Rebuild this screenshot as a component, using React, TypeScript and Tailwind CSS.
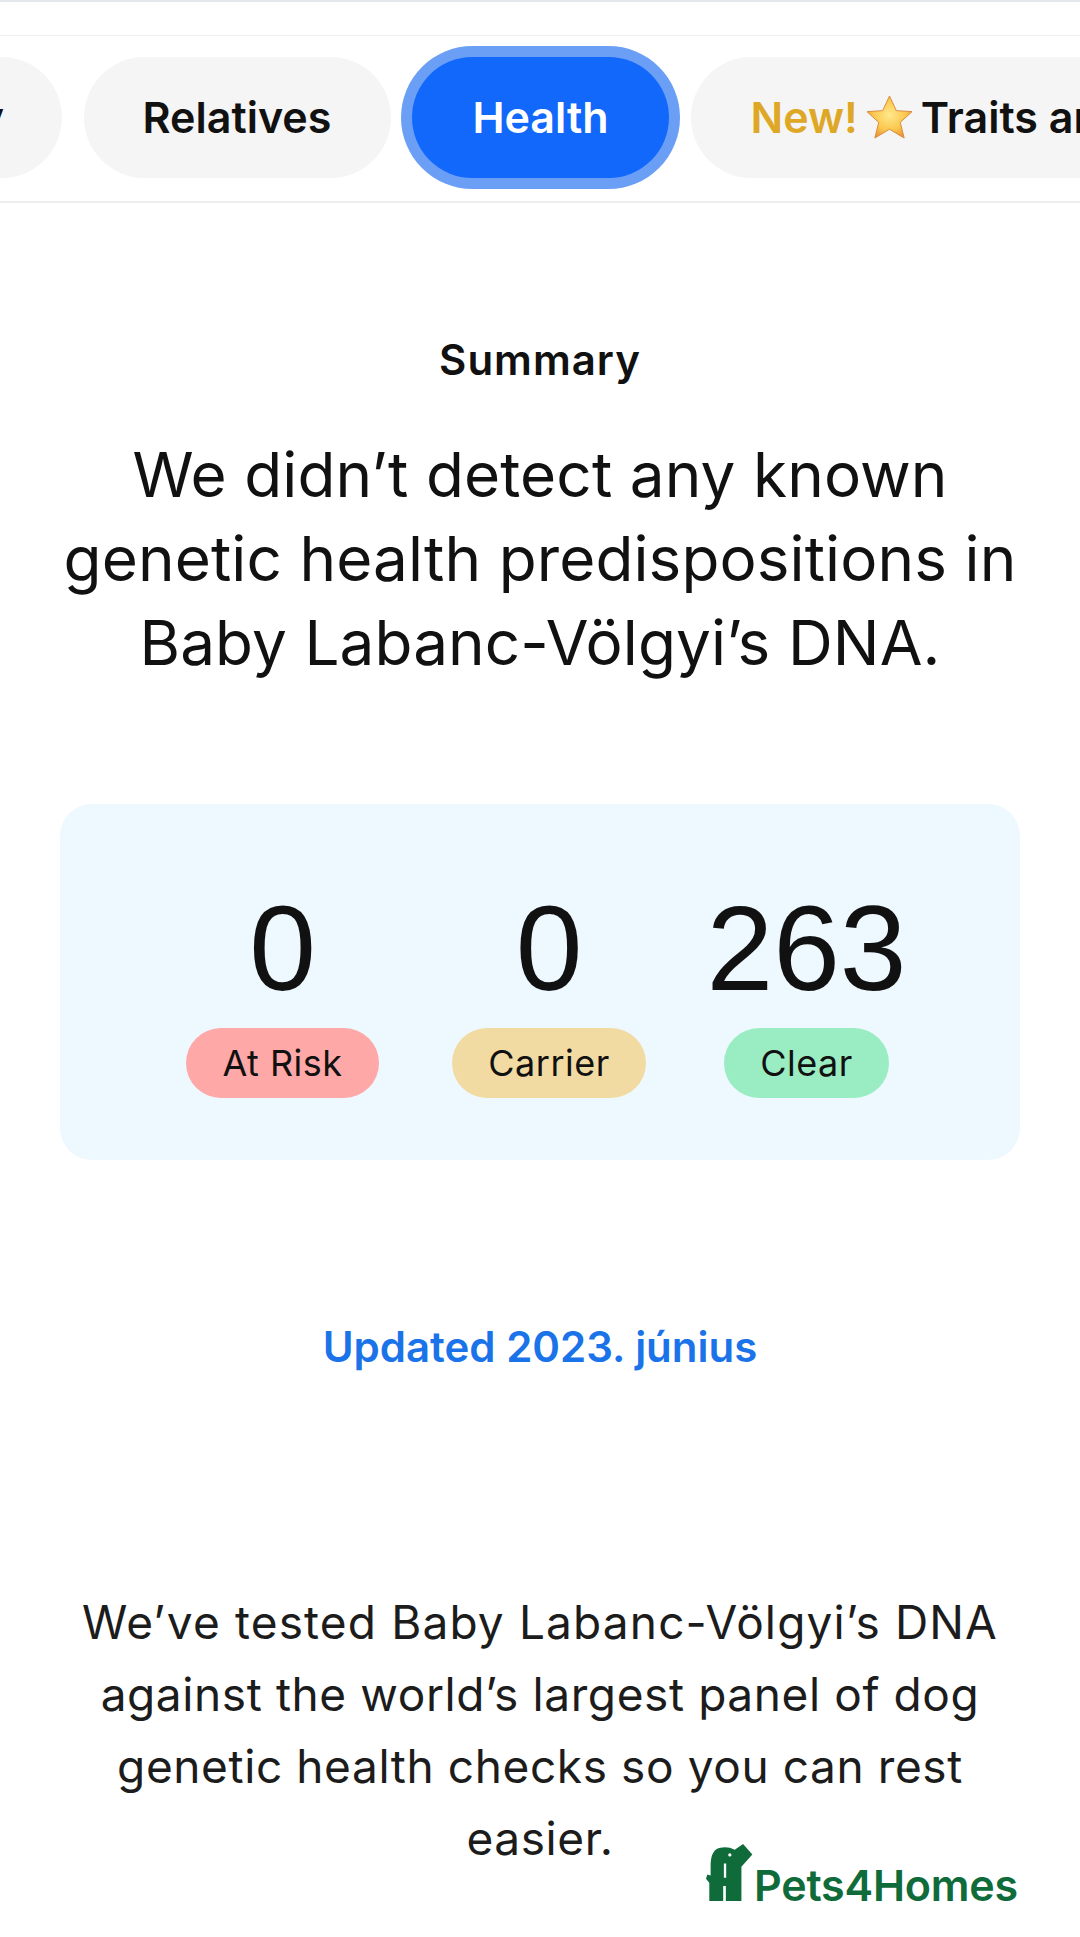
const sans = 'font-["Inter","Liberation_Sans",sans-serif]'

function Star() {
  return (
    <svg viewBox="-1 -1 48 46" className="w-[47px] h-[45px] shrink-0 mx-[8px]">
      <defs>
        <radialGradient id="star" cx="0.5" cy="0.45" r="0.6">
          <stop offset="0" stopColor="#ffe88c" />
          <stop offset="0.6" stopColor="#fbc74e" />
          <stop offset="1" stopColor="#e58f35" />
        </radialGradient>
      </defs>
      <path
        d="M23 0 L30 15 L46 16 L34 27 L38 43 L23 34 L8 43 L12 27 L0 16 L16 15 Z"
        fill="url(#star)"
        stroke="#d98a3c"
        strokeWidth="1"
        strokeLinejoin="round"
      />
    </svg>
  )
}

function Tab({ children, active, className }: { children: React.ReactNode; active?: boolean; className: string }) {
  return (
    <div
      className={`h-[121px] rounded-[61px] flex items-center shrink-0 whitespace-nowrap text-[43px] font-semibold ${className} ${
        active ? 'bg-[#1268fb] text-white shadow-[0_0_0_11px_#6b9ff5]' : 'bg-[#f5f5f5] text-[#111111]'
      }`}
    >
      {children}
    </div>
  )
}

function Stat({ value, label, color, className }: { value: string; label: string; color: string; className: string }) {
  return (
    <div className={`flex flex-col items-center ${className}`}>
      <p className="font-['Liberation_Sans',sans-serif] text-[120px] leading-[118px] text-[#111111]">{value}</p>
      <span className={`mt-[21px] h-[70px] rounded-[35px] px-[36px] flex items-center text-[36px] tracking-[0.5px] text-[#111111] ${color}`}>
        {label}
      </span>
    </div>
  )
}

export default function App() {
  return (
    <div className={`w-[1080px] h-[1937px] bg-white overflow-hidden relative ${sans}`}>
      <div className="h-[36px] border-t-2 border-[#e4e7ec] border-b border-b-[#eeeeee]" />
      <div className="h-[167px] pb-[2px] border-b-2 border-[#eeeeee] flex items-center overflow-hidden">
        <div className="-ml-[245px] flex gap-[21.5px]">
          <Tab className="w-[307px] justify-end pr-[58px]">Ancestry</Tab>
          <Tab className="w-[307px] justify-center">Relatives</Tab>
          <Tab active className="w-[257px] justify-center">Health</Tab>
          <Tab className="w-[560px] pl-[60px]">
            <span className="text-[#dfa726]">New!</span>
            <Star />
            <span>Traits and more</span>
          </Tab>
        </div>
      </div>

      <h2 className="mt-[133px] text-center text-[42px] leading-[48px] font-semibold tracking-[1px] text-[#111111]">Summary</h2>
      <h1 className="mt-[49px] text-center text-[62px] leading-[84px] tracking-[0.1px] text-[#111111]">
        We didn’t detect any known
        <br />
        genetic health predispositions in
        <br />
        Baby Labanc-Völgyi’s DNA.
      </h1>

      <div className="mt-[119px] mx-[60px] h-[356px] rounded-[32px] bg-[#edf8ff] flex pl-[125px] pt-[85px]">
        <Stat value="0" label="At Risk" color="bg-[#ffa8a8]" className="w-[195px]" />
        <Stat value="0" label="Carrier" color="bg-[#f2dba2]" className="w-[192px] ml-[73px]" />
        <Stat value="263" label="Clear" color="bg-[#9aedc3]" className="w-[197px] ml-[63px]" />
      </div>

      <p className="mt-[163px] text-center text-[42px] leading-[48px] font-semibold text-[#1a73e8]">Updated 2023. június</p>

      <p className="mt-[215px] text-center text-[46px] leading-[72px] tracking-[0.6px] text-[#1c1c1c]">
        <span className="tracking-[1.15px]">We’ve tested Baby Labanc-Völgyi’s DNA</span>
        <br />
        against the world’s largest panel of dog
        <br />
        genetic health checks so you can rest
        <br />
        easier.
      </p>

      <div className="absolute left-[705px] top-[1843px] flex items-end">
        <svg viewBox="15 10 145 178" className="w-[48px] h-[59px]">
          <path
            fillRule="evenodd"
            d="M28 185 V130 L18 118 L22 105 L32 108 V72 Q34 28 62 24 Q85 20 105 30 L130 13 L158 45 L125 82 V185 H78 V140 H70 V185 Z M72 72 V115 H79 V72 Z M90 41 A5 5 0 1 0 90 51 A5 5 0 1 0 90 41 Z"
            fill="#0f6b3a"
          />
        </svg>
        <span className="ml-[1px] -mb-[8px] text-[43px] leading-[50px] font-semibold tracking-[-0.2px] text-[#0f6b3a]">Pets4Homes</span>
      </div>
    </div>
  )
}
